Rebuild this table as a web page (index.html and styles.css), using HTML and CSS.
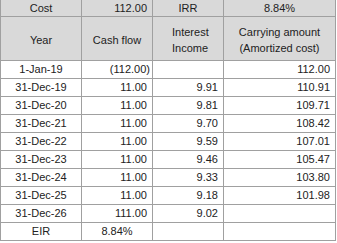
FILE: index.html
```
<!DOCTYPE html>
<html>
<head>
<meta charset="utf-8">
<link rel="stylesheet" href="styles.css">
</head>
<body>
<div class="sheet">
  <div class="c h center">Cost</div>
  <div class="c h right">112.00</div>
  <div class="c h center">IRR</div>
  <div class="c h center">8.84%</div>

  <div class="c h center tall">Year</div>
  <div class="c h center tall">Cash flow</div>
  <div class="c h tall indent">Interest<br>Income</div>
  <div class="c h center tall">Carrying amount<br>(Amortized cost)</div>

  <div class="c center">1-Jan-19</div>
  <div class="c right paren">(112.00)</div>
  <div class="c right"></div>
  <div class="c right">112.00</div>

  <div class="c center">31-Dec-19</div>
  <div class="c right">11.00</div>
  <div class="c right">9.91</div>
  <div class="c right">110.91</div>

  <div class="c center">31-Dec-20</div>
  <div class="c right">11.00</div>
  <div class="c right">9.81</div>
  <div class="c right">109.71</div>

  <div class="c center">31-Dec-21</div>
  <div class="c right">11.00</div>
  <div class="c right">9.70</div>
  <div class="c right">108.42</div>

  <div class="c center">31-Dec-22</div>
  <div class="c right">11.00</div>
  <div class="c right">9.59</div>
  <div class="c right">107.01</div>

  <div class="c center">31-Dec-23</div>
  <div class="c right">11.00</div>
  <div class="c right">9.46</div>
  <div class="c right">105.47</div>

  <div class="c center">31-Dec-24</div>
  <div class="c right">11.00</div>
  <div class="c right">9.33</div>
  <div class="c right">103.80</div>

  <div class="c center">31-Dec-25</div>
  <div class="c right">11.00</div>
  <div class="c right">9.18</div>
  <div class="c right">101.98</div>

  <div class="c center">31-Dec-26</div>
  <div class="c right">111.00</div>
  <div class="c right">9.02</div>
  <div class="c right"></div>

  <div class="c center">EIR</div>
  <div class="c center">8.84%</div>
  <div class="c"></div>
  <div class="c"></div>
</div>
</body>
</html>
```
FILE: styles.css
```
html, body {
  margin: 0;
  padding: 0;
  background: #ffffff;
}
.sheet {
  display: grid;
  grid-template-columns: 80px 70px 70px 111px;
  grid-template-rows: 16px 43px repeat(10, 17px);
  gap: 1px;
  padding: 0 1px 1px 1px;
  background: #a0a0a0;
  width: max-content;
  font-family: "Liberation Sans", Arial, sans-serif;
  font-size: 11px;
  color: #222222;
}
.c {
  background: #ffffff;
  display: flex;
  align-items: center;
  line-height: 13px;
  white-space: nowrap;
}
.h {
  background: #d9d9d9;
}
.center {
  justify-content: center;
  text-align: center;
}
.right {
  justify-content: flex-end;
  padding-right: 5px;
}
.paren {
  padding-right: 2px;
}
.indent {
  padding-left: 19px;
  text-align: left;
}
.tall {
  line-height: 16px;
  padding-top: 2px;
}
```
